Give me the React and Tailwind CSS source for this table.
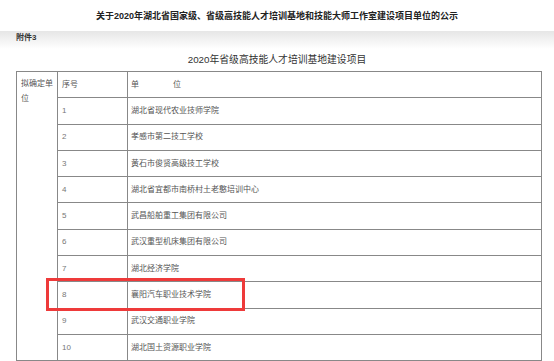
import React from "react";

const rows = [
  "湖北省现代农业技师学院",
  "孝感市第二技工学校",
  "黄石市俊贤高级技工学校",
  "湖北省宜都市南桥村土老憨培训中心",
  "武昌船舶重工集团有限公司",
  "武汉重型机床集团有限公司",
  "湖北经济学院",
  "襄阳汽车职业技术学院",
  "武汉交通职业学院",
  "湖北国土资源职业学院",
];

const cjk = { fontFamily: '"Liberation Sans", "Noto Sans CJK SC", sans-serif' };

const App = () => {
  return (
    <div className="w-[554px] h-[361px] overflow-hidden bg-white" style={cjk}>
      <div className="h-[31px] flex items-center justify-center">
        <h1 className="text-[9px] font-bold text-[#222] leading-none pt-[2px]">
          关于2020年湖北省国家级、省级高技能人才培训基地和技能大师工作室建设项目单位的公示
        </h1>
      </div>
      <div className="h-[18px] bg-gradient-to-b from-[#e6e6e6] to-white pl-[16px]">
        <p className="text-[8px] font-bold text-[#333] leading-[14px]">附件3</p>
      </div>
      <div className="h-[22px] flex items-center justify-center">
        <p className="text-[9.8px] text-[#333] leading-none">2020年省级高技能人才培训基地建设项目</p>
      </div>

      <div className="relative ml-[16px] w-[526px]">
        <table className="w-full border-collapse table-fixed text-[8px] text-[#555]">
          <colgroup>
            <col className="w-[41px]" />
            <col className="w-[70px]" />
            <col />
          </colgroup>
          <tbody>
            <tr className="h-[26.3px]">
              <td rowSpan={11} className="border border-[#888] align-top pl-[4px] pr-[2px] pt-[4px] leading-[15px]">
                拟确定单位
              </td>
              <td className="border border-[#888] pl-[4px] align-middle">序号</td>
              <td className="border border-[#888] pl-[3px] align-middle">
                单<span className="ml-[34px]">位</span>
              </td>
            </tr>
            {rows.map((name, i) => (
              <tr key={i} className="h-[26.3px]">
                <td className="border border-[#888] pl-[4px] align-middle text-[#777]">{i + 1}</td>
                <td className="border border-[#888] pl-[3px] align-middle">{name}</td>
              </tr>
            ))}
          </tbody>
        </table>
        <div className="absolute left-[30px] top-[207px] w-[199px] h-[33px] border-[3px] border-[#ee3a3a]" />
      </div>
    </div>
  );
};

export default App;
